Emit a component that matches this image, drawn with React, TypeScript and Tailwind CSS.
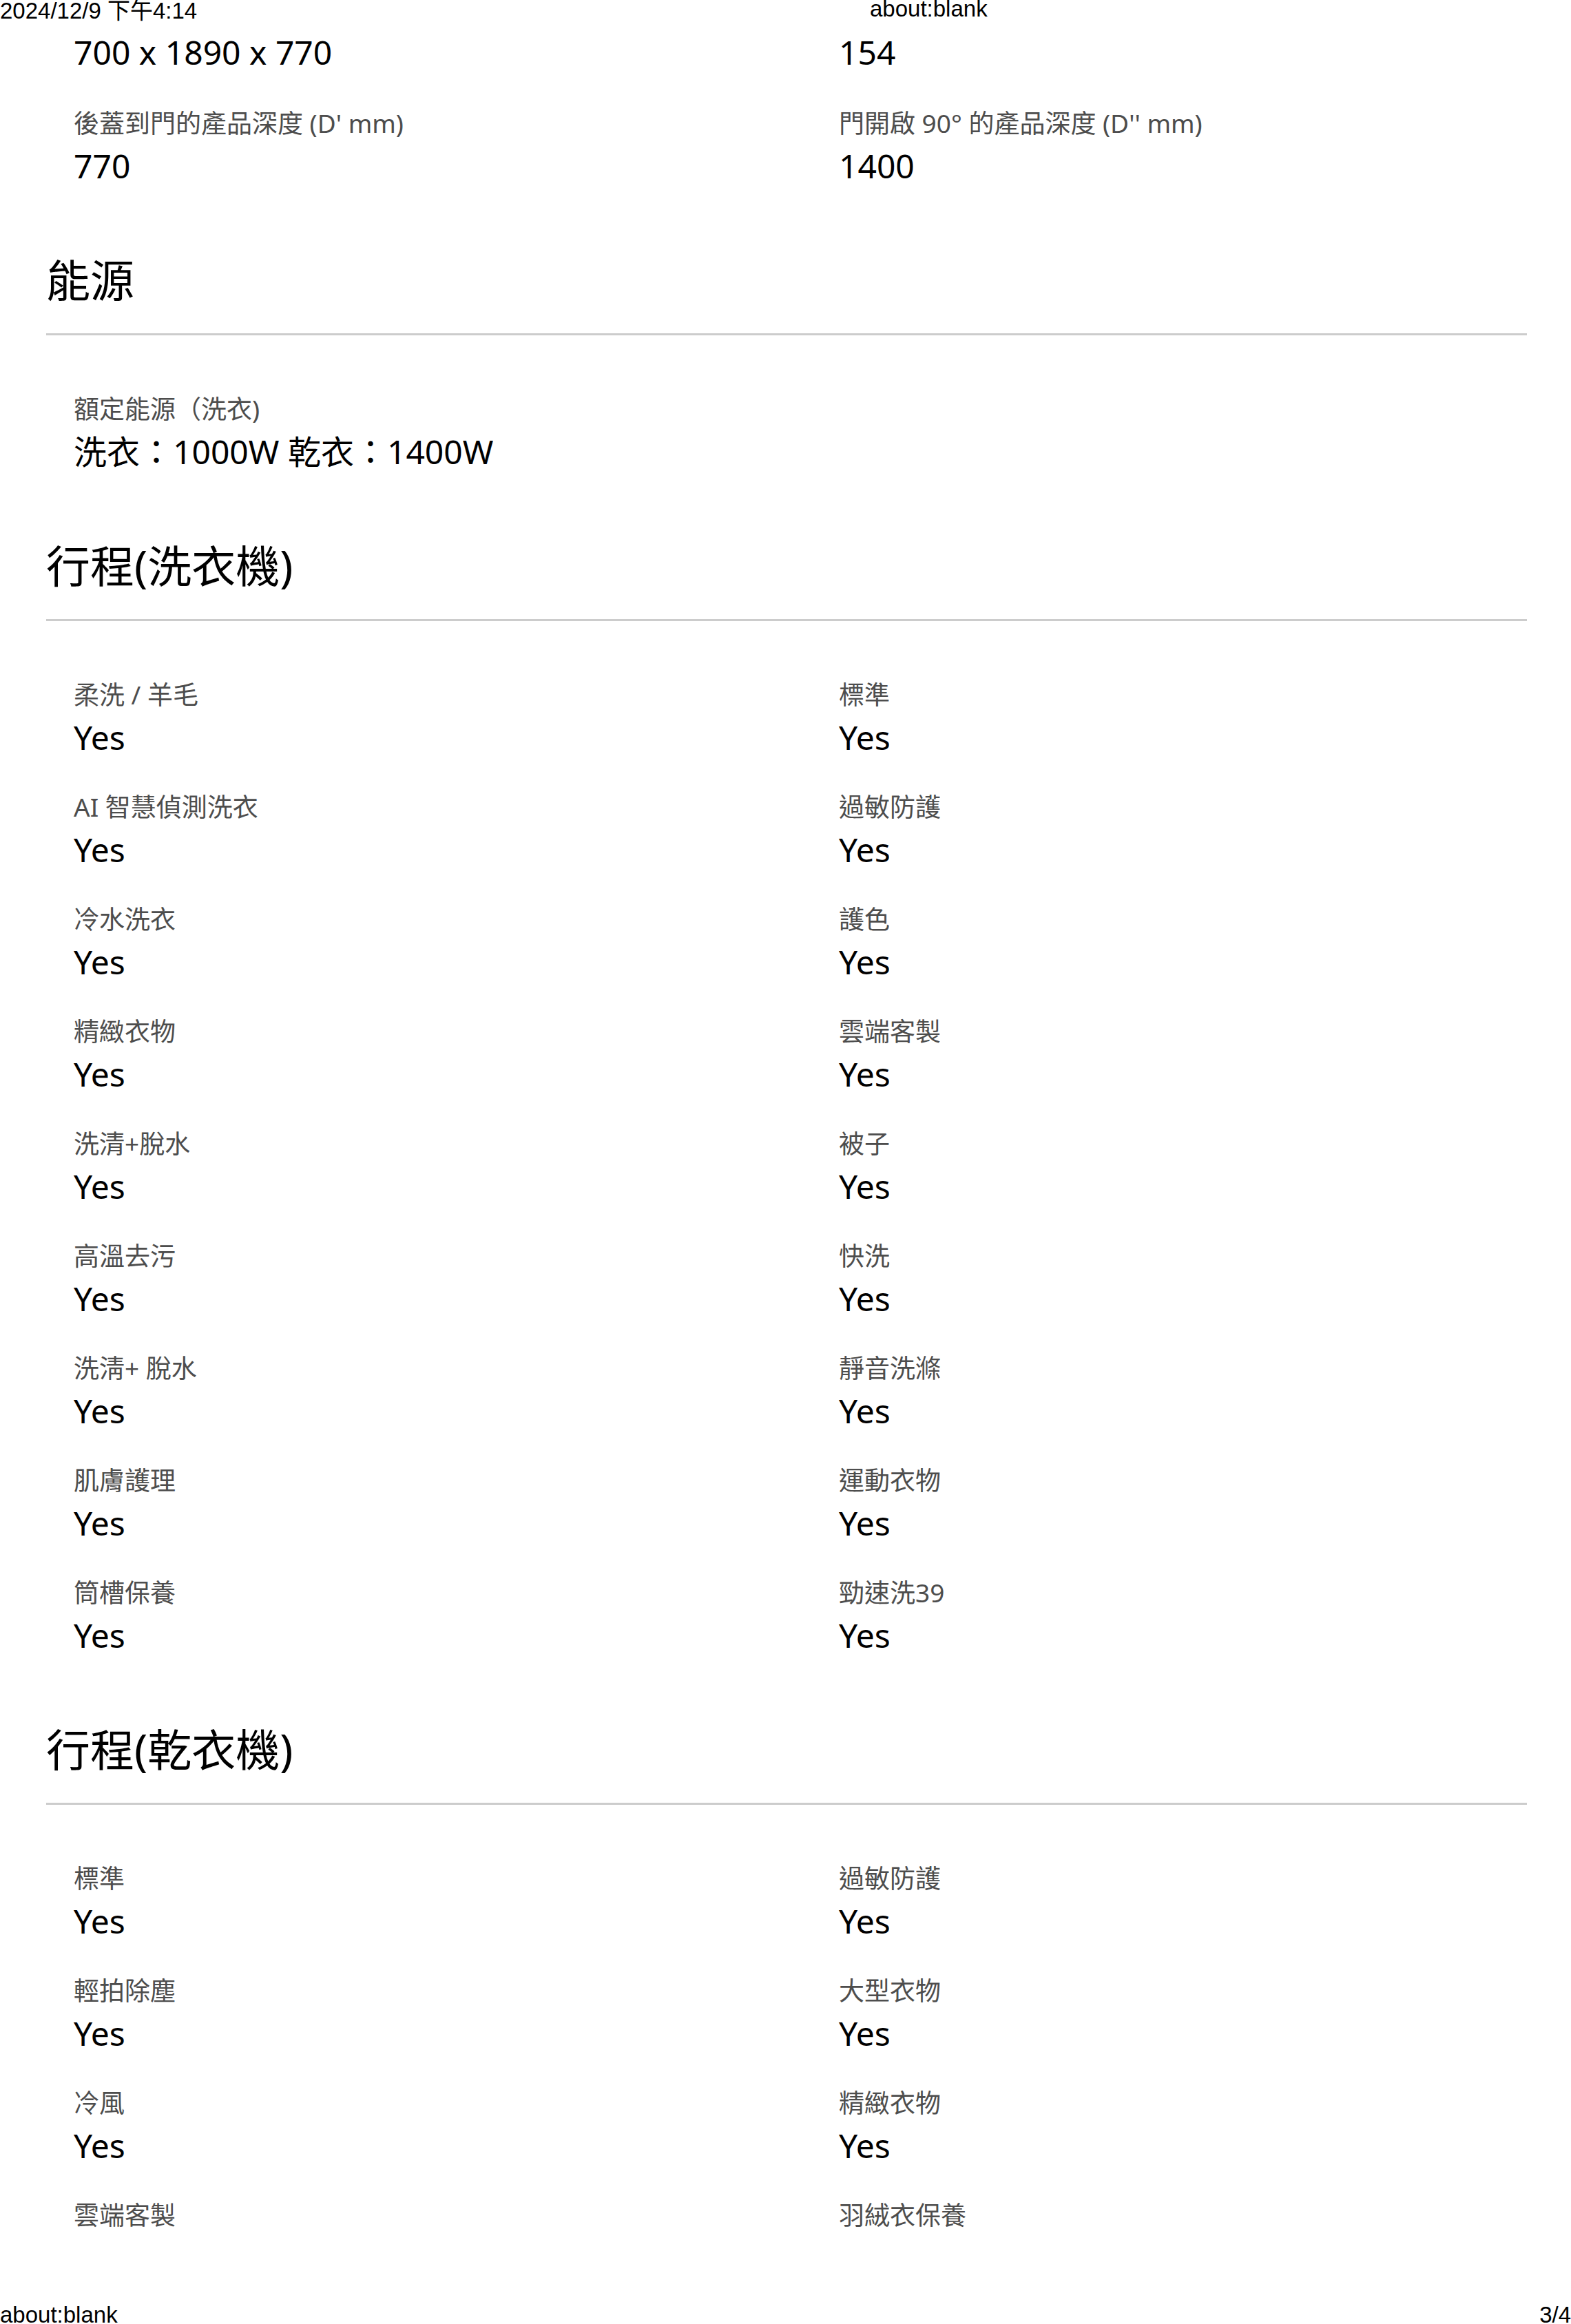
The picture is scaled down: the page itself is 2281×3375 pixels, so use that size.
type Spec = { label?: string; value?: string };

const top: [Spec, Spec][] = [
  [{ value: "700 x 1890 x 770" }, { value: "154" }],
  [
    { label: "後蓋到門的產品深度 (D' mm)", value: "770" },
    { label: "門開啟 90° 的產品深度 (D'' mm)", value: "1400" },
  ],
];

const washer: [string, string][] = [
  ["柔洗 / 羊毛", "標準"],
  ["AI 智慧偵測洗衣", "過敏防護"],
  ["冷水洗衣", "護色"],
  ["精緻衣物", "雲端客製"],
  ["洗清+脫水", "被子"],
  ["高溫去污", "快洗"],
  ["洗淸+ 脫水", "靜音洗滌"],
  ["肌膚護理", "運動衣物"],
  ["筒槽保養", "勁速洗39"],
];

const dryer: [string, string][] = [
  ["標準", "過敏防護"],
  ["輕拍除塵", "大型衣物"],
  ["冷風", "精緻衣物"],
];

const yes = (rows: [string, string][]): [Spec, Spec][] =>
  rows.map(([a, b]) => [{ label: a, value: "Yes" }, { label: b, value: "Yes" }]);

export default function App() {
  return (
    <div className="flex h-[3375px] w-[2281px] flex-col overflow-hidden bg-white font-['Noto_Sans','Noto_Sans_CJK_TC',sans-serif] text-black">
      {/* 列印頁首 */}
      <div className="flex h-[32px] items-start font-['Liberation_Sans','Noto_Sans_CJK_TC',sans-serif] text-[33px]">
        <div className="w-[1263px] leading-[32px]">2024/12/9 下午4:14</div>
        <div className="leading-[26px]">about:blank</div>
      </div>

      <div className="ml-[67px] w-[2150px]">
        <Grid rows={top.slice(0, 1)} className="mt-[13px]" />
        <Grid rows={top.slice(1)} className="mt-[47px]" />

        <Section title="能源">
          <Grid rows={[[{ label: "額定能源（洗衣)", value: "洗衣：1000W 乾衣：1400W" }, {}]]} />
        </Section>

        <Section title="行程(洗衣機)">
          <Grid rows={yes(washer)} />
        </Section>

        <Section title="行程(乾衣機)">
          <Grid rows={[...yes(dryer), [{ label: "雲端客製" }, { label: "羽絨衣保養" }]]} />
        </Section>
      </div>

      {/* 列印頁尾 */}
      <div className="mt-auto flex h-[26px] justify-between font-['Liberation_Sans',sans-serif] text-[33px] leading-[26px]">
        <span>about:blank</span>
        <span>3/4</span>
      </div>
    </div>
  );
}

function Section({ title, children }: { title: string; children: React.ReactNode }) {
  return (
    <div className="mt-[95px]">
      <h2 className="border-b-[3px] border-[#cccccc] pb-[37px] text-[64px] font-normal leading-[80px]">{title}</h2>
      <div className="pt-[82px]">{children}</div>
    </div>
  );
}

function Grid({ rows, className }: { rows: [Spec, Spec][]; className?: string }) {
  return (
    <div className={`grid grid-cols-[1111px_1fr] gap-y-[45px] pl-[40px] ${className ?? ""}`}>
      {rows.map(([a, b], i) => [<Item key={`a${i}`} {...a} />, <Item key={`b${i}`} {...b} />])}
    </div>
  );
}

function Item({ label, value }: Spec) {
  return (
    <div>
      {label && <div className="text-[37px] leading-[50px] text-[#4d4d4d]">{label}</div>}
      {value && <div className={`${label ? "mt-[6px]" : ""} text-[48px] leading-[62px]`}>{value}</div>}
    </div>
  );
}
